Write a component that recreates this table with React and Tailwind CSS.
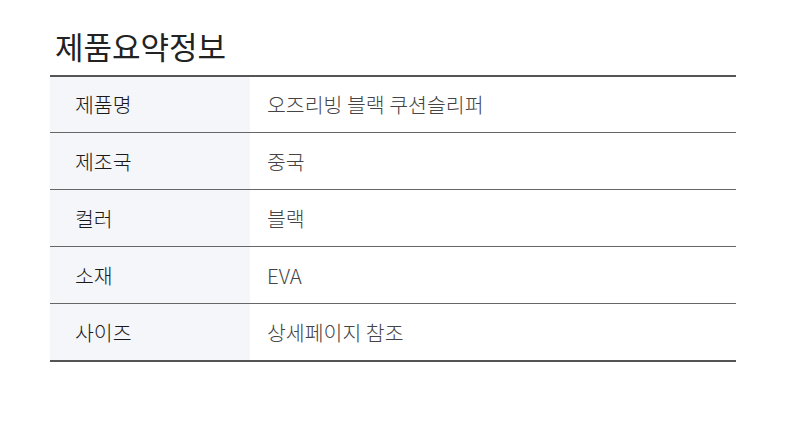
const rows = [
  ["제품명", "오즈리빙 블랙 쿠션슬리퍼"],
  ["제조국", "중국"],
  ["컬러", "블랙"],
  ["소재", "EVA"],
  ["사이즈", "상세페이지 참조"],
];

export default function App() {
  return (
    <div
      className="min-h-[442px] w-[790px] bg-white px-[50px] pt-[26px]"
      style={{ fontFamily: '"Noto Sans CJK KR", "Noto Sans", sans-serif' }}
    >
      <h2 className="pl-[5px] text-[31px] font-normal leading-[40px] text-[#222]">
        제품요약정보
      </h2>
      <div className="mt-[9px] w-[686px] border-t-2 border-b-2 border-[#555]">
        {rows.map(([label, value], i) => (
          <div
            key={label}
            className={`flex items-center ${i === 0 ? "h-[56px] border-b border-[#666]" : i < rows.length - 1 ? "h-[57px] border-b border-[#666]" : "h-[56px]"}`}
          >
            <div className="flex h-full w-[200px] items-center bg-[#f5f6fa] pl-[25px] text-[20.5px] font-light text-[#1a1a1a]">
              {label}
            </div>
            <div className="pl-[17px] text-[20.5px] font-extralight text-[#444]">
              {value}
            </div>
          </div>
        ))}
      </div>
    </div>
  );
}
